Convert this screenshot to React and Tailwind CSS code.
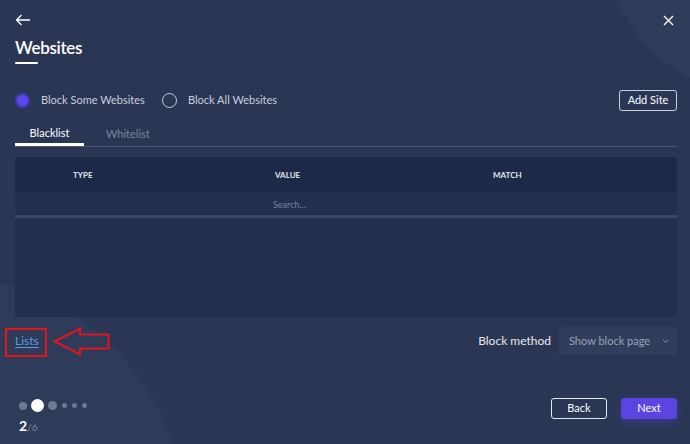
export default function App() {
    const font = { fontFamily: 'Lato, "Noto Sans", sans-serif' };
    return (
        <div className="relative w-[690px] h-[444px] overflow-hidden bg-[#2a3653] text-white" style={font}>
            {/* decorative circles */}
            <div className="absolute w-[340px] h-[340px] rounded-full bg-[#2f3c5a] left-[600px] top-[-242px]" />
            <div className="absolute w-[490px] h-[490px] rounded-full bg-[#2e3b59] left-[-305px] top-[275px]" />

            <div className="relative flex flex-col h-full pl-[15px] pr-[13px] pt-[13px]">
                {/* Header */}
                <div className="flex items-center justify-between h-[14px]">
                    <svg width="16" height="12" viewBox="0 0 16 12" fill="none" stroke="white" strokeWidth="1.3">
                        <path d="M15 6H1.5M6.5 1L1.5 6l5 5" />
                    </svg>
                    <svg width="11" height="11" viewBox="0 0 11 11" fill="none" stroke="white" strokeWidth="1.4" className="mr-[3px]">
                        <path d="M1 1l9 9M10 1l-9 9" />
                    </svg>
                </div>

                <h1 className="mt-[9px] text-[17px] leading-[24px] font-semibold tracking-[-0.3px]">Websites</h1>
                <div className="mt-[2px] h-[2px] w-[23px] bg-white rounded" />

                {/* Radio row */}
                <div className="mt-[26px] flex items-center justify-between h-[21px]">
                    <div className="flex items-center text-[11px] text-[#c9cfdc]">
                        <span className="w-[15px] h-[15px] rounded-full bg-[#5a48e8] border-2 border-[#4438b8]" />
                        <span className="ml-[11px] w-[121px]">Block Some Websites</span>
                        <span className="w-[15px] h-[15px] rounded-full border-[1.5px] border-[#c9cfdc]" />
                        <span className="ml-[11px]">Block All Websites</span>
                    </div>
                    <button className="h-[21px] w-[58px] rounded-[3px] border border-[#c9cfdc] text-[11px] text-white">Add Site</button>
                </div>

                {/* Tabs */}
                <div className="mt-[7px] flex border-b border-[#4a5672] text-[11px]">
                    <div className="w-[69px] h-[28px] pt-[5px] flex items-center justify-center border-b-[3px] border-white -mb-[2px] text-white">Blacklist</div>
                    <div className="ml-[22px] h-[28px] pt-[5px] flex items-center text-[#7d879c]">Whitelist</div>
                </div>

                {/* Table */}
                <div className="mt-[10px] flex flex-col h-[160px] bg-[#22304e]">
                    <div className="h-[35px] bg-[#1c2a48] grid grid-cols-[260px_218px_1fr] items-center text-[8px] font-bold text-[#e2e6ef]">
                        <span className="pl-[58px]">TYPE</span>
                        <span>VALUE</span>
                        <span>MATCH</span>
                    </div>
                    <div className="h-[26px] pt-[3px] flex items-center text-[9px] text-[#77819a] border-b-[3px] border-[#3a4764]">
                        <span className="pl-[258px]">Search...</span>
                    </div>
                    <div className="flex-1" />
                </div>

                {/* Lists / Block method */}
                <div className="relative mt-[10px] flex items-center justify-between h-[28px]">
                    <a className="text-[12px] text-[#5b9be0] underline underline-offset-2">Lists</a>
                    <div className="absolute left-[-10px] top-[1px] w-[42px] h-[29px] border-2 border-[#e3141c]" />
                    <svg className="absolute left-[38px] top-[0px]" width="57" height="29" viewBox="0 0 57 29" fill="none" stroke="#e3141c" strokeWidth="2">
                        <path d="M1.5 14.5L27 1.5v6h28.5v14H27v6z" strokeLinejoin="miter" />
                    </svg>
                    <div className="flex items-center">
                        <span className="text-[12px] text-[#e6e9f0]">Block method</span>
                        <div className="ml-[8px] w-[118px] h-[28px] rounded-[3px] bg-[#313e5b] flex items-center justify-between pl-[10px] pr-[8px] text-[11px] text-[#99a2b5]">
                            <span>Show block page</span>
                            <svg width="7" height="5" viewBox="0 0 7 5" fill="none" stroke="#8b94a8" strokeWidth="1">
                                <path d="M1 1l2.5 2.5L6 1" />
                            </svg>
                        </div>
                    </div>
                </div>

                {/* Footer */}
                <div className="mt-auto mb-[8px] flex items-end justify-between">
                    <div className="flex flex-col pl-[4px]">
                        <div className="flex items-center gap-[4px]">
                            <span className="w-[8px] h-[8px] rounded-full bg-[#6f7991]" />
                            <span className="w-[13px] h-[13px] rounded-full bg-white" />
                            <span className="w-[9px] h-[9px] rounded-full bg-[#6f7991]" />
                            <span className="w-[5px] h-[5px] rounded-full bg-[#6f7991] mx-[0.5px]" />
                            <span className="w-[5px] h-[5px] rounded-full bg-[#6f7991] mx-[0.5px]" />
                            <span className="w-[5px] h-[5px] rounded-full bg-[#6f7991] mx-[0.5px]" />
                        </div>
                        <div className="mt-[3px] flex items-baseline">
                            <span className="text-[14px] font-bold text-white">2</span>
                            <span className="text-[10px] text-[#7d879c]">/6</span>
                        </div>
                    </div>
                    <div className="flex items-center gap-[14px] mb-[17px]">
                        <button className="w-[56px] h-[21px] rounded-[3px] border border-[#e6e9f0] text-[11px] text-white">Back</button>
                        <button className="w-[56px] h-[21px] rounded-[3px] bg-[#5b45e2] text-[11px] text-white shadow-[0_4px_12px_rgba(91,69,226,0.35)]">Next</button>
                    </div>
                </div>
            </div>
        </div>
    );
}
